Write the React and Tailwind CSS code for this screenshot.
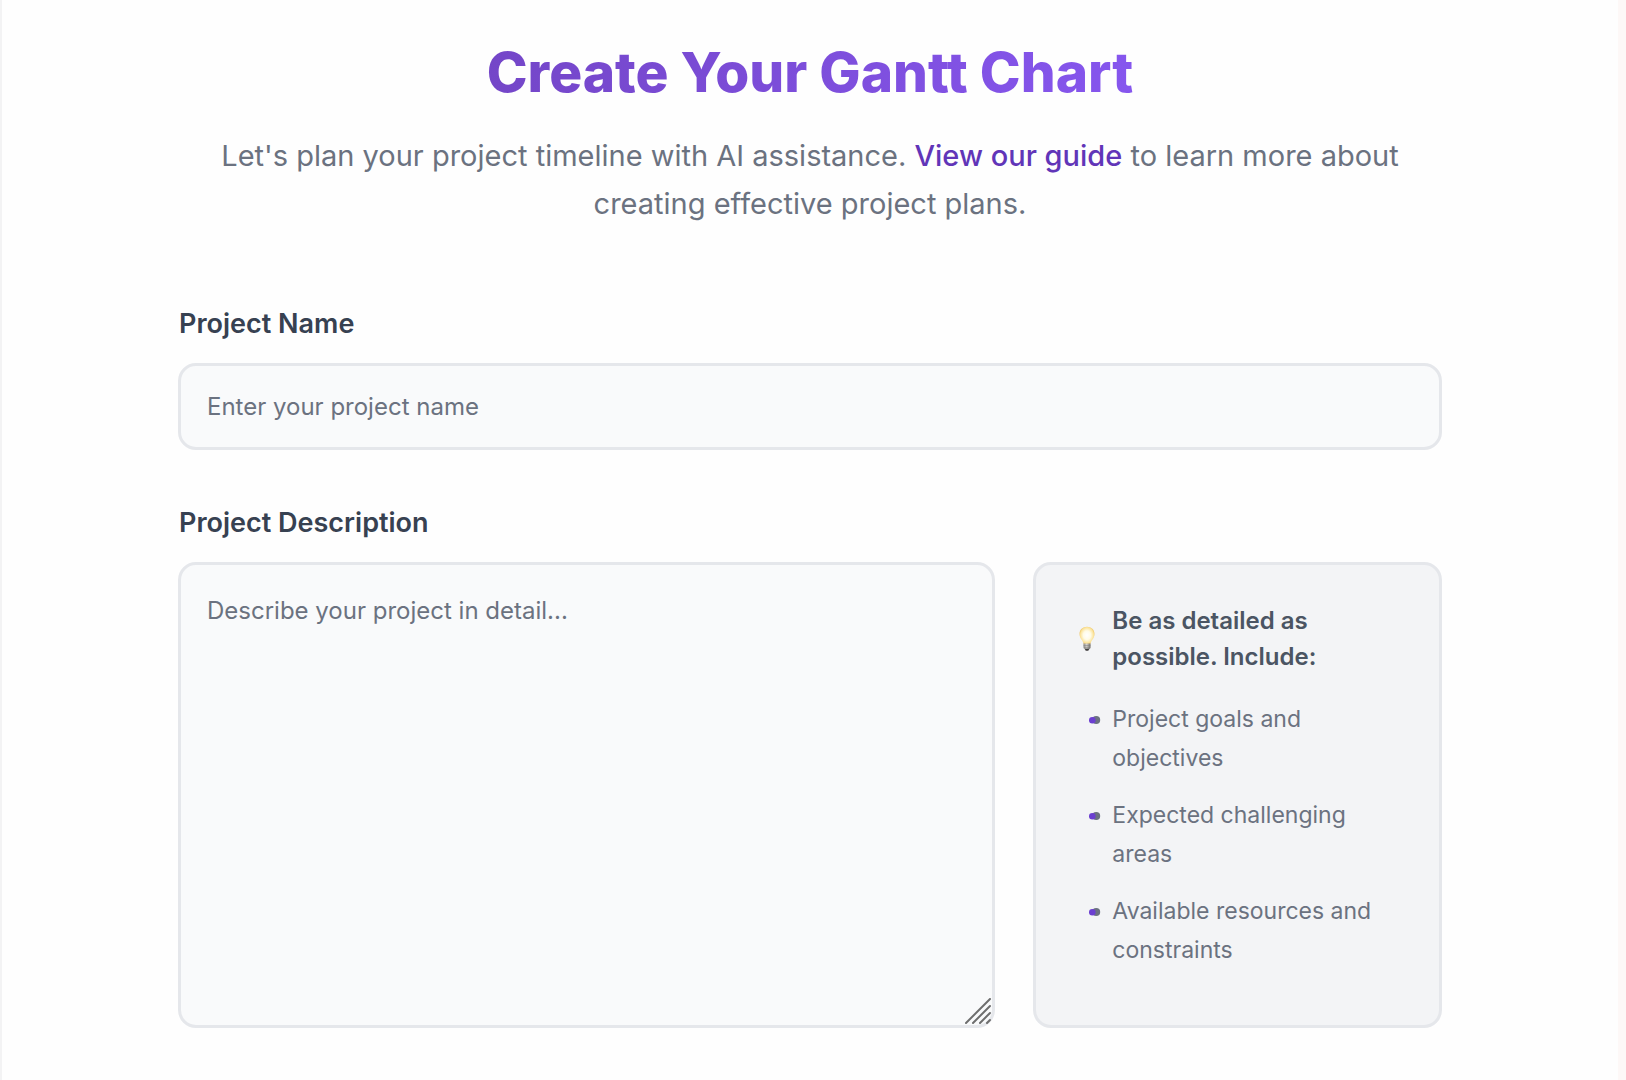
import React, { useState } from 'react';

const tips = [
  'Project goals and objectives',
  'Expected challenging areas',
  'Available resources and constraints',
];

const labelClass = 'mb-[19px] block pl-px text-[27px] leading-10 font-semibold text-[#374151]';

const fieldClass =
  'block w-full rounded-[18px] border-3 border-[#e5e7eb] bg-[#f9fafb] px-[26px] text-2xl text-gray-700 placeholder:text-[#6b7280] placeholder:opacity-100 outline-none';

const BulbIcon = () => (
  <svg viewBox="0 0 26 26" className="w-[26px] h-[26px] shrink-0" aria-hidden="true">
    <defs>
      <radialGradient id="bulb-glass" cx="0.5" cy="0.48" r="0.55">
        <stop offset="0" stopColor="#ffffff" />
        <stop offset="0.45" stopColor="#fffbe6" />
        <stop offset="0.8" stopColor="#fbe39a" />
        <stop offset="1" stopColor="#e8b850" />
      </radialGradient>
      <linearGradient id="bulb-base" x1="0" x2="1">
        <stop offset="0" stopColor="#8d8a86" />
        <stop offset="0.45" stopColor="#d6d4d0" />
        <stop offset="1" stopColor="#6f6c69" />
      </linearGradient>
    </defs>
    <path
      d="M13 .8c-4.300 0-7.500 3.100-7.500 7.200 0 2.600 1.200 4.400 2.500 6.300.9 1.300 1.600 2.600 1.800 4h6.400c.2-1.400.9-2.700 1.800-4 1.300-1.900 2.500-3.700 2.500-6.300 0-4.100-3.200-7.200-7.500-7.200z"
      fill="url(#bulb-glass)"
    />
    <path d="M9.500 17.500h7v4.600l-1.600 1.600h-3.800l-1.600-1.600z" fill="url(#bulb-base)" />
    <path d="M9.500 19.700h7M10 21.700h6" stroke="#7b7876" strokeWidth="0.600" />
    <path d="M10.800 22.700h4.400l-.9 2h-2.600z" fill="#3f3d3c" />
  </svg>
);

const Bullet = () => (
  <svg viewBox="0 0 12 8" className="w-3 h-[39px] shrink-0 overflow-visible" aria-hidden="true">
    <circle cx="8.200" cy="4.500" r="4" fill="#6b7280" />
    <circle cx="4.300" cy="4.700" r="3.300" fill="#6b3fd0" />
  </svg>
);

const ResizeGrip = () => (
  <svg
    viewBox="0 0 26 26"
    className="absolute right-1 bottom-1 w-[26px] h-[26px] pointer-events-none"
    fill="none"
    stroke="#6e6e6e"
    strokeWidth="2"
    strokeLinecap="round"
    aria-hidden="true"
  >
    <path d="M1 25 25 1M8 25 25 8M15 25 25 15M22 25 25 22" />
  </svg>
);

const Tips = () => (
  <aside className="rounded-[18px] border-3 border-[#e5e7eb] bg-[#f3f4f6] p-[38px]">
    <div className="flex items-center gap-3 mb-[25px]">
      <BulbIcon />
      <h2 className="text-2xl leading-9 font-semibold text-[#4b5563]">
        Be as detailed as possible. Include:
      </h2>
    </div>
    <ul className="flex flex-col gap-[18px]">
      {tips.map((tip) => (
        <li key={tip} className="flex gap-3 pl-[14px] text-[23px] leading-[39px] text-[#6b7280]">
          <Bullet />
          <span>{tip}</span>
        </li>
      ))}
    </ul>
  </aside>
);

const App = () => {
  const [name, setName] = useState('');
  const [description, setDescription] = useState('');

  return (
    <div className="min-h-screen bg-[#fdf8f7] pr-2 font-['Inter',sans-serif]">
      <main className="min-h-screen border-l-2 border-[#f3f3f4] bg-[#fefefe] px-8 pt-[37px] pb-12">
        <div className="mx-auto max-w-[1264px]">
          <header className="mb-[76px] text-center">
            <h1 className="mb-[25px] text-[55px] leading-[70px] font-extrabold">
              <span className="bg-linear-to-r from-[#7446c8] to-[#8656ee] bg-clip-text text-transparent">
                Create Your Gantt Chart
              </span>
            </h1>
            <p className="text-[29px] leading-12 text-[#6b7280]">
              Let's plan your project timeline with AI assistance.{' '}
              <a href="#guide" className="font-medium text-[#6135b8]">
                View our guide
              </a>{' '}
              to learn more about creating effective project plans.
            </p>
          </header>

          <form onSubmit={(e) => e.preventDefault()}>
            <div className="mb-[53px]">
              <label htmlFor="project-name" className={labelClass}>
                Project Name
              </label>
              <input
                id="project-name"
                type="text"
                value={name}
                onChange={(e) => setName(e.target.value)}
                placeholder="Enter your project name"
                className={`${fieldClass} h-[87px]`}
              />
            </div>

            <label htmlFor="project-description" className={labelClass}>
              Project Description
            </label>
            <div className="grid grid-cols-[2fr_1fr] gap-[38px]">
              <div className="relative">
                <textarea
                  id="project-description"
                  value={description}
                  onChange={(e) => setDescription(e.target.value)}
                  placeholder="Describe your project in detail..."
                  className={`${fieldClass} h-[466px] resize-none py-7 leading-9`}
                />
                <ResizeGrip />
              </div>
              <Tips />
            </div>
          </form>
        </div>
      </main>
    </div>
  );
};

export default App;
